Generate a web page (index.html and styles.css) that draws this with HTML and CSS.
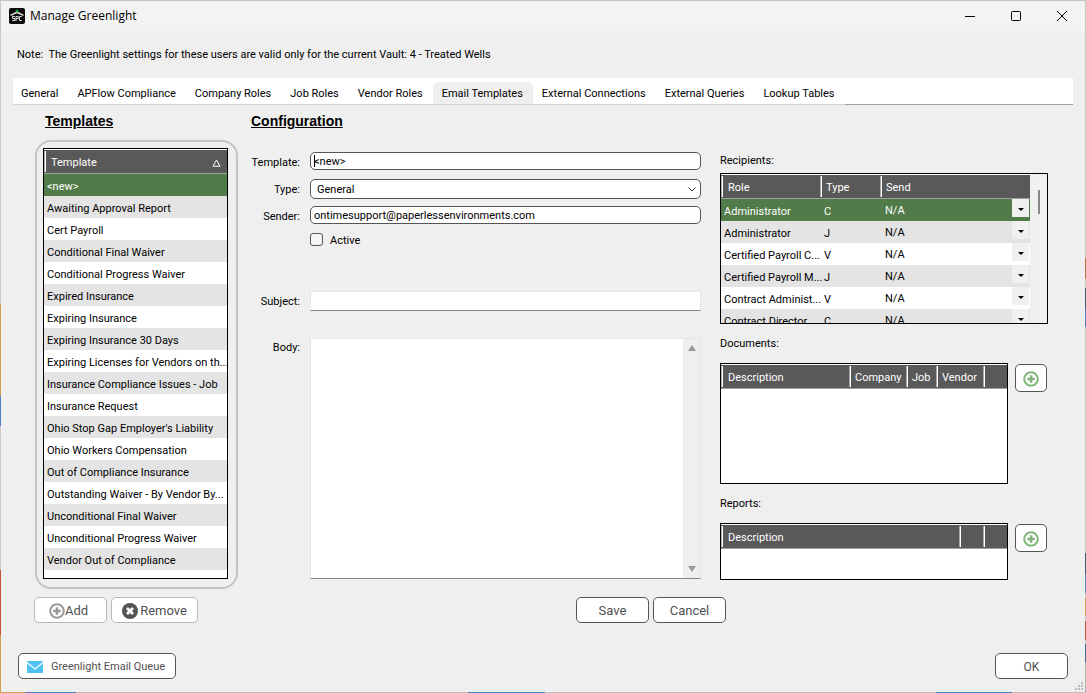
FILE: index.html
```html
<!DOCTYPE html>
<html lang="en">
<head>
<meta charset="utf-8">
<title>Manage Greenlight</title>
<link rel="stylesheet" href="styles.css">
</head>
<body>
<svg class="sprite" aria-hidden="true">
  <symbol id="plus-circle" viewBox="0 0 16 16">
    <circle cx="8" cy="8" r="6.8" fill="none" stroke="currentColor" stroke-width="2"/>
    <path d="M8 4.2v7.6M4.2 8h7.6" fill="none" stroke="currentColor" stroke-width="2.6"/>
  </symbol>
</svg>
<div class="window">
  <header class="titlebar">
    <svg class="app-icon" viewBox="0 0 16 16" aria-hidden="true">
      <rect width="16" height="16" rx="2" fill="#0a0a0a"/>
      <path d="M1.5 7.3C4 6.3 6 5 8 4.6c2 .4 4 1.700 6.500 2.700" fill="none" stroke="#e8e8e8" stroke-width="1.500"/>
      <circle cx="8" cy="3" r="1.500" fill="#12a53a"/>
      <path d="M6 8.500H3.500v2H6v2H3.300M7 13V8.500h2.200v2.200H7M12.800 8.500h-2.300v4h2.300" fill="none" stroke="#d8d8d8" stroke-width="1"/>
    </svg>
    <h1 class="title">Manage Greenlight</h1>
    <div class="window-controls">
      <button class="window-button" aria-label="Minimize"><svg viewBox="0 0 12 12"><path d="M1 6.500h10" stroke="#000" fill="none"/></svg></button>
      <button class="window-button" aria-label="Maximize"><svg viewBox="0 0 12 12"><rect x="1.500" y="1.500" width="9" height="9" rx="1" stroke="#000" fill="none"/></svg></button>
      <button class="window-button" aria-label="Close"><svg viewBox="0 0 12 12"><path d="M1 1l10 10M11 1L1 11" stroke="#000" fill="none"/></svg></button>
    </div>
  </header>

  <p class="note">Note:&nbsp; The Greenlight settings for these users are valid only for the current Vault: 4 - Treated Wells</p>

  <nav class="tabs">
    <button class="tab">General</button>
    <button class="tab">APFlow Compliance</button>
    <button class="tab">Company Roles</button>
    <button class="tab">Job Roles</button>
    <button class="tab">Vendor Roles</button>
    <button class="tab tab-active">Email Templates</button>
    <button class="tab">External Connections</button>
    <button class="tab">External Queries</button>
    <button class="tab">Lookup Tables</button>
    <span class="tabs-rest"></span>
  </nav>

  <main class="workspace">
    <section class="templates">
      <h2 class="heading heading-templates">Templates</h2>
      <div class="panel">
        <div class="list">
          <table class="grid">
            <thead><tr><th><span class="sort-head">Template
              <svg class="sort" viewBox="0 0 9 8" aria-hidden="true"><path d="M4.500 1L1 7.200h7z" fill="none" stroke="#fff"/></svg></span></th></tr></thead>
            <tbody>
              <tr class="selected"><td>&lt;new&gt;</td></tr>
              <tr><td>Awaiting Approval Report</td></tr>
              <tr><td>Cert Payroll</td></tr>
              <tr><td>Conditional Final Waiver</td></tr>
              <tr><td>Conditional Progress Waiver</td></tr>
              <tr><td>Expired Insurance</td></tr>
              <tr><td>Expiring Insurance</td></tr>
              <tr><td>Expiring Insurance 30 Days</td></tr>
              <tr><td>Expiring Licenses for Vendors on th...</td></tr>
              <tr><td>Insurance Compliance Issues - Job</td></tr>
              <tr><td>Insurance Request</td></tr>
              <tr><td>Ohio Stop Gap Employer's Liability</td></tr>
              <tr><td>Ohio Workers Compensation</td></tr>
              <tr><td>Out of Compliance Insurance</td></tr>
              <tr><td>Outstanding Waiver - By Vendor By...</td></tr>
              <tr><td>Unconditional Final Waiver</td></tr>
              <tr><td>Unconditional Progress Waiver</td></tr>
              <tr><td>Vendor Out of Compliance</td></tr>
            </tbody>
          </table>
        </div>
      </div>
      <div class="actions">
        <button class="button button-soft button-add"><svg class="icon" aria-hidden="true"><use href="#plus-circle"/></svg>Add</button>
        <button class="button button-soft button-remove"><svg class="icon" viewBox="0 0 16 16" aria-hidden="true"><circle cx="8" cy="8" r="8" fill="#555"/><path d="M5 5l6 6M11 5l-6 6" stroke="#fff" stroke-width="2.800"/></svg>Remove</button>
      </div>
    </section>

    <section class="configuration">
      <h2 class="heading">Configuration</h2>
      <form class="form">
        <label class="label" for="template">Template:</label>
        <div class="field"><input class="input" id="template" value="&lt;new&gt;"><span class="caret"></span></div>
        <label class="label" for="type">Type:</label>
        <div class="field">
          <select class="select" id="type"><option>General</option></select>
          <svg class="chevron" viewBox="0 0 8 5" aria-hidden="true"><path d="M.5.500L4 4 7.500.500" fill="none" stroke="#333"/></svg>
        </div>
        <label class="label" for="sender">Sender:</label>
        <div class="field"><input class="input" id="sender" value="ontimesupport@paperlessenvironments.com"></div>
        <label class="check"><input class="checkbox" type="checkbox">Active</label>
        <label class="label" for="subject">Subject:</label>
        <div class="field"><input class="plain-input" id="subject"></div>
        <label class="label label-body" for="body">Body:</label>
        <div class="editor">
          <textarea class="textarea" id="body"></textarea>
          <div class="scrollbar">
            <svg class="arrow" viewBox="0 0 8 6" aria-hidden="true"><path d="M4 0l4 6H0z" fill="#999"/></svg>
            <svg class="arrow" viewBox="0 0 8 6" aria-hidden="true"><path d="M4 6l4-6H0z" fill="#999"/></svg>
          </div>
        </div>
      </form>
      <div class="actions actions-end">
        <button class="button">Save</button>
        <button class="button">Cancel</button>
      </div>
    </section>

    <section class="related">
      <h3 class="caption">Recipients:</h3>
      <div class="box box-recipients">
        <table class="grid">
          <colgroup><col class="col-role"><col class="col-type"><col></colgroup>
          <thead><tr><th>Role</th><th>Type</th><th>Send</th></tr></thead>
          <tbody>
            <tr class="selected"><td>Administrator</td><td>C</td><td><div class="send">N/A<button class="drop" aria-label="Choose"></button></div></td></tr>
            <tr><td>Administrator</td><td>J</td><td><div class="send">N/A<button class="drop" aria-label="Choose"></button></div></td></tr>
            <tr><td>Certified Payroll C...</td><td>V</td><td><div class="send">N/A<button class="drop" aria-label="Choose"></button></div></td></tr>
            <tr><td>Certified Payroll M...</td><td>J</td><td><div class="send">N/A<button class="drop" aria-label="Choose"></button></div></td></tr>
            <tr><td>Contract Administ...</td><td>V</td><td><div class="send">N/A<button class="drop" aria-label="Choose"></button></div></td></tr>
            <tr><td>Contract Director</td><td>C</td><td><div class="send">N/A<button class="drop" aria-label="Choose"></button></div></td></tr>
          </tbody>
        </table>
        <div class="thin-scroll"><span class="thumb"></span></div>
      </div>
      <h3 class="caption caption-documents">Documents:</h3>
      <div class="attach attach-documents">
        <div class="box">
          <table class="grid">
            <colgroup><col><col class="col-company"><col class="col-job"><col class="col-vendor"><col class="col-blank"></colgroup>
            <thead><tr><th>Description</th><th class="tight">Company</th><th class="tight">Job</th><th class="tight">Vendor</th><th></th></tr></thead>
          </table>
        </div>
        <button class="button button-plus" aria-label="Add document"><svg class="icon" aria-hidden="true"><use href="#plus-circle"/></svg></button>
      </div>
      <h3 class="caption caption-reports">Reports:</h3>
      <div class="attach attach-reports">
        <div class="box">
          <table class="grid">
            <colgroup><col><col class="col-blank"><col class="col-blank"></colgroup>
            <thead><tr><th>Description</th><th></th><th></th></tr></thead>
          </table>
        </div>
        <button class="button button-plus" aria-label="Add report"><svg class="icon" aria-hidden="true"><use href="#plus-circle"/></svg></button>
      </div>
    </section>
  </main>

  <footer class="footer">
    <button class="button button-queue"><svg class="mail" viewBox="0 0 16 12" aria-hidden="true"><rect width="16" height="12" fill="#4fc1f0"/><path d="M0 1.500l8 6.500 8-6.500" fill="none" stroke="#fff" stroke-width="1.300"/></svg>Greenlight Email Queue</button>
    <button class="button button-ok">OK</button>
  </footer>
  <svg class="grip" viewBox="0 0 8 8" aria-hidden="true"><path d="M6 0h2v2H6zM3 3h2v2H3zM6 3h2v2H6zM0 6h2v2H0zM3 6h2v2H3zM6 6h2v2H6z" fill="#bbb"/></svg>
</div>
</body>
</html>
```
FILE: styles.css
```css
* { box-sizing: border-box; }

body {
  margin: 0;
  font-family: Roboto, "Liberation Sans", Arial, sans-serif;
  font-size: 11px;
  line-height: 16px;
  color: #000;
}

button, input, select, textarea { font: inherit; color: inherit; }
button { padding: 0; border: 0; background: none; }
h1, h2, h3, p { margin: 0; font-weight: normal; }
.sprite { position: absolute; width: 0; height: 0; }

.window {
  position: relative;
  display: flex;
  flex-direction: column;
  min-height: 100vh;
  padding: 1px;
  background:
    linear-gradient(#c4c4c4, #c4c4c4) 0 0 / 100% 1px no-repeat,
    linear-gradient(90deg, #c8a050 25px, #4f7fc4 25px 76px, #c0c0c0 76px 468px, #4f7fc4 468px 545px, #c0c0c0 545px 936px, #4f7fc4 936px 1012px, #c0c0c0 1012px) 0 100% / 100% 1px no-repeat,
    linear-gradient(#c8c8c8 304px, #cf9c4a 304px 396px, #4f7fc4 396px 426px, #c8c8c8 426px 570px, #c4533a 570px 635px, #cf9c4a 635px) 0 0 / 1px 100% no-repeat,
    linear-gradient(#c8c8c8 258px, #b87040 258px 279px, #c8c8c8 279px 288px, #435f70 288px 308px, #4f7fc4 308px 327px, #c8c8c8 327px 553px, #435f70 553px 574px, #5b8fc8 574px 593px, #c8c8c8 593px 598px, #cf9c4a 598px 616px, #c8c8c8 616px 621px, #b85840 621px 640px, #c8c8c8 640px 644px, #3a6f90 644px 662px, #b0b0b0 662px) 100% 0 / 1px 100% no-repeat,
    #efefef;
}

.titlebar {
  display: flex;
  align-items: center;
  height: 30px;
  padding-left: 8px;
  background: #f3f3f3;
}
.app-icon { width: 16px; height: 16px; margin-right: 5px; }
.title { font-family: "Open Sans", "Noto Sans", sans-serif; font-size: 12px; }
.window-controls { display: flex; margin-left: auto; }
.window-button { display: grid; place-items: center; width: 46px; height: 30px; }
.window-button svg { width: 12px; height: 12px; }

.note { padding: 16px 16px 15px; }

.tabs {
  display: flex;
  height: 27px;
  margin: 0 12px;
  background: #fff;
}
.tab {
  padding: 5px 10px 0 9px;
  border-bottom: 1px solid #d5d5d5;
  white-space: nowrap;
}
.tab:first-child { padding-left: 8px; }
.tab-active { margin-top: 4px; padding-top: 1px; border-radius: 6px 6px 0 0; background: #efefef; }
.tabs-rest { flex: 1; border-bottom: 1px solid #a0a0a0; }

.workspace {
  display: grid;
  grid-template-columns: 204px minmax(0, 1fr) 328px;
  flex: 1;
  padding: 8px 37px 30px 33px;
}
.templates, .configuration, .related { display: flex; flex-direction: column; }
.configuration { padding: 0 19px 0 13px; }

.heading {
  margin-bottom: 11px;
  font-family: "Liberation Sans", Arial, sans-serif;
  font-size: 14px;
  font-weight: bold;
  text-decoration: underline;
}
.heading-templates { padding-left: 11px; }

.panel {
  display: flex;
  flex: 1;
  margin-left: 1px;
  padding: 6px 8px 8px 6px;
  border: 2px solid #c4c4c4;
  border-radius: 16px;
}
.list { flex: 1; border: 1px solid #000; background: #fff; overflow: hidden; }

.grid { width: 100%; table-layout: fixed; border-spacing: 0; }
.grid th {
  height: 25px;
  padding: 3px 6px 0 7px;
  border-top: 1px solid #fff;
  border-bottom: 1px solid #a0a0a0;
  background: linear-gradient(90deg, #a8a8a8 1px, #fff 1px) 0 50% / 2px 21px no-repeat #595959;
  color: #fff;
  font-weight: normal;
  text-align: left;
}
.grid td {
  height: 22px;
  padding: 4px 0 0 3px;
  white-space: nowrap;
}
.grid tbody tr:nth-child(even) { background: #e4e4e4; }
.grid tbody .selected { background: #517b48; color: #fff; }
.sort-head { display: flex; align-items: center; justify-content: space-between; }
.sort { width: 9px; height: 8px; }

.actions { display: flex; gap: 4px; margin-top: 8px; }
.actions-end { justify-content: flex-end; margin: 18px -25px 0 0; }

.button {
  display: flex;
  align-items: center;
  justify-content: center;
  width: 73px;
  height: 26px;
  padding-top: 1px;
  border: 1px solid #555;
  border-radius: 5px;
  background: #fff;
  color: #505050;
  font-size: 13px;
}
.button-soft { border-color: #b8b8b8; }
.icon { width: 16px; height: 16px; }
.button-add { padding-right: 4px; }
.button-add .icon { color: #999; }
.button-remove { gap: 2px; width: 87px; }

.form {
  display: grid;
  grid-template-columns: 49px minmax(0, 1fr);
  grid-template-rows: 27px 27px 27px 58px 47px 1fr;
  column-gap: 10px;
  flex: 1;
  padding-top: 12px;
}
.label { padding-top: 3px; text-align: right; }
.label-body { padding-top: 2px; }
.field { position: relative; }
.input, .select {
  display: block;
  width: 100%;
  height: 18px;
  padding: 0 3px;
  border: 1px solid #555;
  border-radius: 5px;
  background: #fff;
}
.select { height: 20px; padding: 1px 6px 0; appearance: none; }
.caret { position: absolute; top: 3px; left: 4px; width: 1px; height: 12px; background: #000; }
.chevron { position: absolute; top: 8px; right: 5px; width: 8px; height: 5px; }
.check { grid-column: 2; display: flex; align-items: flex-start; gap: 7px; line-height: 15px; }
.checkbox {
  width: 13px;
  height: 13px;
  margin: 0;
  appearance: none;
  border: 1px solid #555;
  border-radius: 3px;
  background: #f5f5f5;
}
.plain-input {
  display: block;
  width: 100%;
  height: 20px;
  border: 1px solid #e5e5e5;
  border-bottom-color: #858585;
}
.editor { display: flex; border: 1px solid #e5e5e5; border-bottom-color: #858585; background: #fff; }
.textarea { flex: 1; min-width: 0; border: 0; background: #fff; resize: none; }
.scrollbar {
  display: flex;
  flex-direction: column;
  align-items: center;
  justify-content: space-between;
  width: 17px;
  padding: 6px 0;
  background: #efefef;
}
.arrow { width: 8px; height: 6px; }

.related { padding: 40px 0 43px; }
.caption { font-size: 11px; }
.box { display: flex; align-items: flex-start; border: 1px solid #000; background: #fff; overflow: hidden; }
.box-recipients { height: 151px; margin-top: 4px; }
.box-recipients .grid { flex: 1; }
.col-role { width: 99px; }
.col-type { width: 60px; }
.col-company { width: 57px; }
.col-job { width: 30px; }
.col-vendor { width: 47px; }
.col-blank { width: 24px; }
.grid th:nth-child(n + 2) { padding-right: 0; padding-left: 6px; }
.box-recipients td:nth-child(n + 2) { padding-left: 4px; }
.box-recipients td:last-child { padding: 0 1px 0 5px; }
.send { display: flex; align-items: flex-start; justify-content: space-between; height: 22px; line-height: 24px; }
.drop {
  display: grid;
  place-items: center;
  width: 17px;
  height: 18px;
  padding-top: 2px;
  background: #f0f0f0;
}
.drop::after {
  content: "";
  border: 3px solid transparent;
  border-top-color: #000;
  border-bottom: 0;
}
.thin-scroll { align-self: stretch; width: 17px; padding: 16px 0 0 8px; background: #f0f0f0; }
.thumb { display: block; width: 2px; height: 24px; background: #888; }
.caption-documents { margin-top: 12px; }
.caption-reports { margin-top: 12px; }
.attach { display: flex; align-items: flex-start; gap: 7px; margin-top: 11px; padding-right: 1px; }
.attach .box { flex: 1; align-self: stretch; }
.attach-documents { flex: 1; }
.attach-reports { height: 57px; }
.button-plus { width: 32px; height: 28px; margin-top: 1px; }
.button-plus .icon { color: #82b57c; }

.footer { display: flex; justify-content: space-between; padding: 0 17px 13px; }
.button-queue { justify-content: flex-start; gap: 8px; width: 158px; padding-left: 8px; font-size: 11px; }
.button-ok { font-size: 12px; }
.mail { width: 16px; height: 12px; }
.grip { position: absolute; right: 3px; bottom: 3px; width: 8px; height: 8px; }
```
